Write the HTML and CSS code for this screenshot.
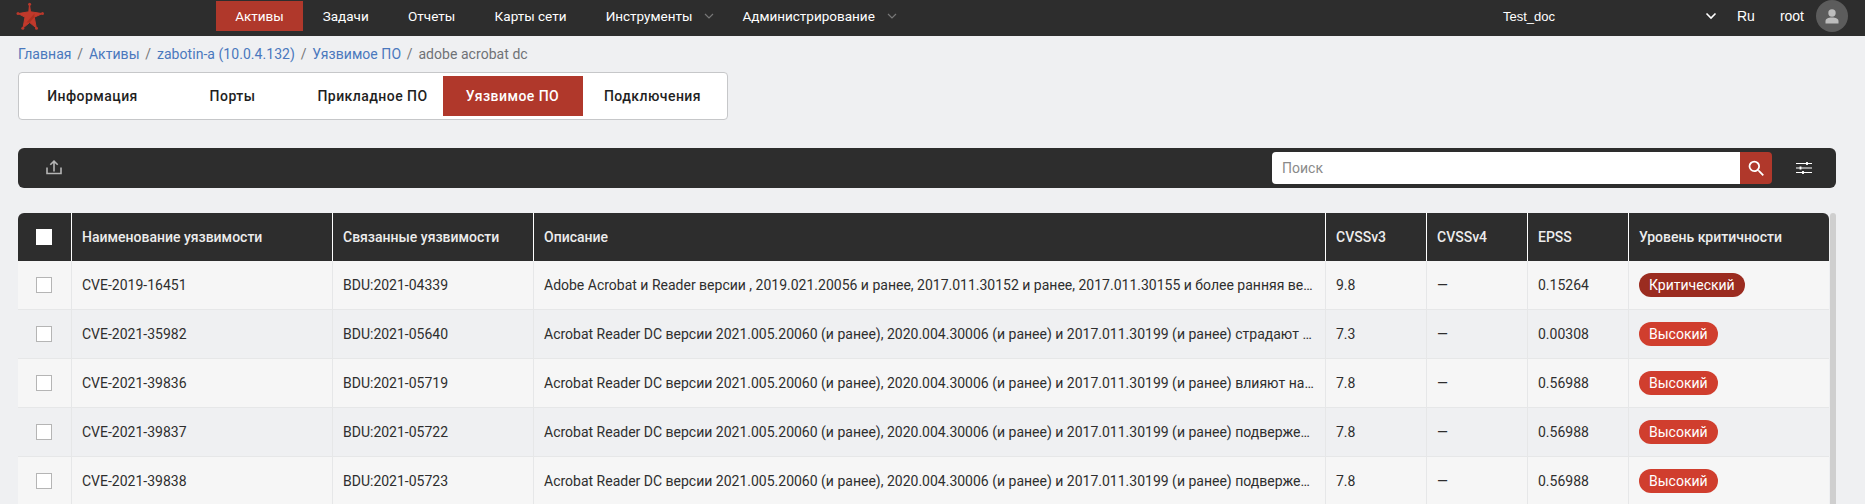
FILE: index.html
```html
<!DOCTYPE html>
<html lang="ru">
<head>
<meta charset="utf-8">
<title>Уязвимое ПО</title>
<link rel="stylesheet" href="styles.css">
</head>
<body>
<header class="topbar">
  <a class="logo" href="#"><svg width="28" height="28" viewBox="0 0 28 28"><path d="M13.500 2.500L12.800 9.800 2.300 11.600 9 15.200 7 26 13.700 20.500 20.300 26 18.300 15.200 26.300 11.600 14.500 9.800z" fill="#c0392b" stroke="#c0392b" stroke-width="1" stroke-linejoin="round"/><circle cx="13.600" cy="2.300" r="1.500" fill="#b8382b"/><circle cx="2" cy="11.500" r="1.500" fill="#b8382b"/><circle cx="26.500" cy="11.500" r="1.500" fill="#b8382b"/><circle cx="6.800" cy="26.300" r="1.500" fill="#b8382b"/><circle cx="20.500" cy="26.300" r="1.500" fill="#b8382b"/><path d="M18.500 11.500L10.500 20.500 13.700 20.500 18.300 15.200z" fill="#a9301f"/></svg></a>
  <nav class="mainnav">
    <a class="navitem active" href="#">Активы</a>
    <a class="navitem" href="#">Задачи</a>
    <a class="navitem" href="#">Отчеты</a>
    <a class="navitem" href="#">Карты сети</a>
    <a class="navitem has-caret" href="#">Инструменты<svg class="caret" width="10" height="6" viewBox="0 0 10 6"><path d="M1 1l4 4 4-4" fill="none" stroke="#777" stroke-width="1.200"/></svg></a>
    <a class="navitem has-caret" href="#">Администрирование<svg class="caret" width="10" height="6" viewBox="0 0 10 6"><path d="M1 1l4 4 4-4" fill="none" stroke="#777" stroke-width="1.200"/></svg></a>
  </nav>
  <div class="userarea">
    <span class="org">Test_doc</span>
    <svg class="orgcaret" width="12" height="8" viewBox="0 0 12 8"><path d="M1.500 1.500L6 6l4.500-4.500" fill="none" stroke="#fff" stroke-width="1.600"/></svg>
    <span class="lang">Ru</span>
    <span class="uname">root</span>
    <span class="avatar"><svg width="14" height="15" viewBox="0 0 14 15"><circle cx="7" cy="4" r="3.700" fill="#bdbdbd"/><path d="M.500 14.500v-2.500C.500 10 3 8.500 7 8.500s6.500 1.500 6.500 3.500v2.500z" fill="#bdbdbd"/></svg></span>
  </div>
</header>
<main class="content">
  <div class="crumbs"><a href="#">Главная</a><i>/</i><a href="#">Активы</a><i>/</i><a href="#">zabotin-a (10.0.4.132)</a><i>/</i><a href="#">Уязвимое ПО</a><i>/</i><span>adobe acrobat dc</span></div>
  <div class="tabs">
    <a class="tab" href="#">Информация</a>
    <a class="tab" href="#">Порты</a>
    <a class="tab" href="#">Прикладное ПО</a>
    <a class="tab active" href="#">Уязвимое ПО</a>
    <a class="tab" href="#">Подключения</a>
  </div>
  <div class="toolbar">
    <button class="iconbtn upload"><svg width="18" height="18" viewBox="0 0 18 18"><path d="M9 12.500V2M5.300 5.800L9 2.100l3.700 3.700M2 8.500v6h14v-6" fill="none" stroke="#b5b5b5" stroke-width="1.600"/></svg></button>
    <div class="search">
      <span class="search-input">Поиск</span>
      <button class="search-btn"><svg width="21" height="21" viewBox="0 0 24 24"><path d="M15.500 14h-.79l-.28-.27A6.470 6.470 0 0 0 16 9.500 6.500 6.500 0 1 0 9.500 16c1.610 0 3.090-.59 4.230-1.570l.27.28v.79l5 4.990L20.490 19l-4.990-5zm-6 0C7.010 14 5 11.990 5 9.500S7.010 5 9.500 5 14 7.010 14 9.500 11.990 14 9.500 14z" fill="#fff"/></svg></button>
    </div>
    <button class="iconbtn tune"><svg width="18" height="18" viewBox="0 0 18 18"><path d="M1 4.500h16M1 9h16M1 13.500h16" stroke="#fff" stroke-width="1.200"/><path d="M12 3v3M5.500 7.500v3M8 12v3" stroke="#fff" stroke-width="1.800"/></svg></button>
  </div>
  <div class="tablewrap">
    <table class="grid">
      <colgroup><col class="c0"><col class="c1"><col class="c2"><col class="c3"><col class="c4"><col class="c5"><col class="c6"><col class="c7"></colgroup>
      <thead>
        <tr><th class="chk"><span class="box head"></span></th><th>Наименование уязвимости</th><th>Связанные уязвимости</th><th>Описание</th><th>CVSSv3</th><th>CVSSv4</th><th>EPSS</th><th>Уровень критичности</th></tr>
      </thead>
      <tbody>
        <tr><td class="chk"><span class="box"></span></td><td>CVE-2019-16451</td><td>BDU:2021-04339</td><td class="desc">Adobe Acrobat и Reader версии , 2019.021.20056 и ранее, 2017.011.30152 и ранее, 2017.011.30155 и более ранняя ве…</td><td>9.8</td><td>—</td><td>0.15264</td><td><span class="badge crit">Критический</span></td></tr>
        <tr><td class="chk"><span class="box"></span></td><td>CVE-2021-35982</td><td>BDU:2021-05640</td><td class="desc">Acrobat Reader DC версии 2021.005.20060 (и ранее), 2020.004.30006 (и ранее) и 2017.011.30199 (и ранее) страдают …</td><td>7.3</td><td>—</td><td>0.00308</td><td><span class="badge high">Высокий</span></td></tr>
        <tr><td class="chk"><span class="box"></span></td><td>CVE-2021-39836</td><td>BDU:2021-05719</td><td class="desc">Acrobat Reader DC версии 2021.005.20060 (и ранее), 2020.004.30006 (и ранее) и 2017.011.30199 (и ранее) влияют на…</td><td>7.8</td><td>—</td><td>0.56988</td><td><span class="badge high">Высокий</span></td></tr>
        <tr><td class="chk"><span class="box"></span></td><td>CVE-2021-39837</td><td>BDU:2021-05722</td><td class="desc">Acrobat Reader DC версии 2021.005.20060 (и ранее), 2020.004.30006 (и ранее) и 2017.011.30199 (и ранее) подверже…</td><td>7.8</td><td>—</td><td>0.56988</td><td><span class="badge high">Высокий</span></td></tr>
        <tr><td class="chk"><span class="box"></span></td><td>CVE-2021-39838</td><td>BDU:2021-05723</td><td class="desc">Acrobat Reader DC версии 2021.005.20060 (и ранее), 2020.004.30006 (и ранее) и 2017.011.30199 (и ранее) подверже…</td><td>7.8</td><td>—</td><td>0.56988</td><td><span class="badge high">Высокий</span></td></tr>
      </tbody>
    </table>
    <div class="scrolltrack"></div>
  </div>
</main>
</body>
</html>
```
FILE: styles.css
```css
* { box-sizing: border-box; }
html, body { margin: 0; height: 504px; overflow: hidden; }
body { background: #eff0f2; font-family: Roboto, "Liberation Sans", sans-serif; font-size: 14px; color: #2e2e2e; }
a { color: inherit; text-decoration: none; }
button { border: 0; background: none; padding: 0; display: flex; align-items: center; justify-content: center; }

.topbar { height: 36px; background: #2d2d2d; display: flex; color: #fff; }
.logo { width: 216px; padding: 2px 0 0 16px; display: block; }
.mainnav { display: flex; height: 30px; margin-top: 1px; font-size: 13.500px; }
.navitem { display: flex; align-items: center; padding: 0 19.700px; white-space: nowrap; }
.navitem.active { background: #b0382b; width: 87px; justify-content: center; padding: 0; }
.has-caret { padding: 0 28px 0 0; }
.navitem:nth-child(5) { margin-left: 19.500px; }
.has-caret .caret { margin-left: 12px; }
.userarea { margin-left: auto; display: flex; align-items: center; height: 32px; padding-right: 17px; font-family: "Liberation Sans", Arial, sans-serif; }
.org { margin-right: 150px; font-size: 13px; }
.orgcaret { margin-right: 20px; }
.lang { margin-right: 25px; }
.uname { margin-right: 12px; }
.avatar { width: 32px; height: 32px; border-radius: 50%; background: #5c5c5c; display: flex; align-items: center; justify-content: center; }

.content { padding: 0 29px 0 18px; }
.crumbs { height: 36px; display: flex; align-items: center; gap: 5.750px; letter-spacing: .05px; color: #6f7276; }
.crumbs a { color: #4a78bd; }
.crumbs i { font-style: normal; color: #777; }

.tabs { width: 710px; height: 48px; background: #fff; border: 1px solid #c6c7c9; border-radius: 4px; display: flex; align-items: center; font-weight: 500; letter-spacing: .45px; color: #1f1f1f; padding-left: 3.500px; }
.tab { width: 140px; height: 40px; display: flex; align-items: center; justify-content: center; }
.tab.active { background: #b0382b; color: #fff; }

.toolbar { margin-top: 28px; height: 40px; width: 1818px; background: #2d2d2d; border-radius: 6px; display: flex; align-items: center; padding: 0 22px 0 26px; }
.iconbtn { width: 20px; height: 20px; }
.search { margin-left: auto; display: flex; height: 32px; width: 500px; margin-right: 22px; }
.search-input { flex: 1; background: #fff; border-radius: 4px 0 0 4px; color: #8a8a8a; display: flex; align-items: center; padding-left: 10px; }
.search-btn { width: 32px; background: #b0382b; border-radius: 0 4px 4px 0; }

.tablewrap { margin-top: 25px; width: 1818px; display: flex; align-items: flex-start; }
.grid { width: 1811px; table-layout: fixed; border-collapse: separate; border-spacing: 0; }
.c0 { width: 53px; } .c1 { width: 261px; } .c2 { width: 201px; } .c3 { width: 792px; } .c4 { width: 101px; } .c5 { width: 101px; } .c6 { width: 101px; } .c7 { width: 201px; }
th { height: 48px; background: #2d2d2d; color: #ececec; font-weight: 500; text-align: left; padding: 0 10px; border-left: 1px solid #fff; white-space: nowrap; }
th:first-child { border-left: 0; border-top-left-radius: 6px; }
th:last-child { border-top-right-radius: 6px; }
td { height: 49px; padding: 0 10px; border-left: 1px solid #e6e7e8; border-bottom: 1px solid #e6e7e8; white-space: nowrap; background: #f6f6f6; }
td:first-child { border-left: 0; }
tbody tr:nth-child(even) td { background: #eff0f2; }
.desc { overflow: hidden; }
.chk { padding: 0 0 0 18px; }
.box { display: block; width: 16px; height: 16px; background: #fff; border: 1px solid #b5b5b5; }
.box.head { border-color: #fff; }
.badge { display: inline-block; height: 24px; line-height: 24px; padding: 0 10px; border-radius: 12px; color: #fff; }
.crit { background: #9b2c20; }
.high { background: #d03e2e; }
.scrolltrack { width: 6px; height: 300px; margin-left: 1px; background: #cfcfcf; border-radius: 3px 3px 0 0; }
```
